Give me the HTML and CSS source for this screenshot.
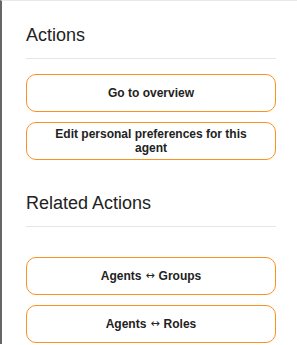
FILE: index.html
```html
<!DOCTYPE html>
<html lang="en">
<head>
    <meta charset="UTF-8">
    <meta name="viewport" content="width=device-width, initial-scale=1.0">
    <title>Agent Actions</title>
    <link rel="stylesheet" href="styles.css">
</head>
<body>
    <div class="sidebar">
        <div class="action-box">
            <h2>Actions</h2>
            <ul class="action-list">
                <li><a class="action-button" href="#">Go to overview</a></li>
                <li><a class="action-button" href="#">Edit personal preferences for this agent</a></li>
            </ul>
        </div>

        <div class="action-box related">
            <h2>Related Actions</h2>
            <ul class="action-list">
                <li><a class="action-button" href="#">Agents <span class="arrow">&harr;</span> Groups</a></li>
                <li><a class="action-button" href="#">Agents <span class="arrow">&harr;</span> Roles</a></li>
            </ul>
        </div>
    </div>
</body>
</html>
```

FILE: styles.css
```css
body {
    margin: 0;
    font-family: "Liberation Sans", Arial, sans-serif;
    color: #222;
    background: #fff;
}
.sidebar {
    border-left: 2px solid #666;
    border-top: 1px solid #e8e8e8;
    padding: 23px 21px 0 24px;
    min-height: 344px;
    box-sizing: border-box;
}
.action-box h2 {
    margin: 0;
    font-size: 18px;
    font-weight: normal;
    line-height: 22px;
    padding-bottom: 12px;
    border-bottom: 1px solid #e6e6e6;
}
.related {
    margin-top: 32px;
}
.action-list {
    list-style: none;
    margin: 15px 0 0 0;
    padding: 0;
}
.related .action-list {
    margin-top: 30px;
}
.action-list li {
    margin-bottom: 10px;
}
.action-button {
    display: flex;
    align-items: center;
    justify-content: center;
    gap: 4px;
    box-sizing: border-box;
    min-height: 38px;
    padding: 4px 16px;
    border: 1px solid #f7931e;
    border-radius: 10px;
    color: #222;
    text-decoration: none;
    text-align: center;
    font-size: 12px;
    font-weight: bold;
    line-height: 14px;
}
.action-button:hover {
    background: #fff6ec;
}
.arrow {
    font-family: "DejaVu Sans", sans-serif;
    font-weight: normal;
    font-size: 11px;
}
```
